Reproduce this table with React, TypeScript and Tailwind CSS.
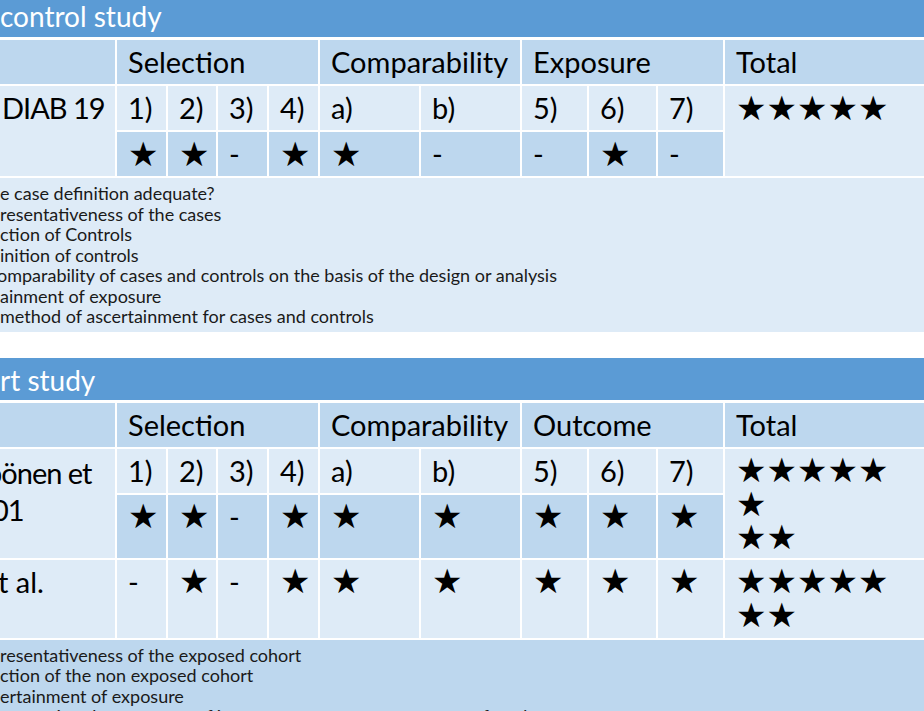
const font = "font-['Lato','DejaVu_Sans',sans-serif]"

const cols =
  "grid grid-cols-[115px_49px_48px_49px_49px_99px_99px_65px_67px_65px_199px] gap-[2px] bg-white"

type CellProps = {
  children?: React.ReactNode
  dark?: boolean
  className?: string
}

function Cell({ children, dark, className = "pl-[11px]" }: CellProps) {
  return (
    <div
      className={`${dark ? "bg-[#bdd7ee]" : "bg-[#deebf7]"} pt-[5px] text-[29px] leading-[34px] text-black whitespace-nowrap overflow-hidden ${className}`}
    >
      {children}
    </div>
  )
}

function Stars({ lines }: { lines: string[] }) {
  return (
    <div className="flex flex-col">
      {lines.map((l, i) => (
        <div key={i} className="h-[33.5px] flex items-center">
          <span className="font-['DejaVu_Sans',sans-serif] text-[34px] leading-none">
            {l}
          </span>
        </div>
      ))}
    </div>
  )
}

const S = "★"

function Mark({ v }: { v: string }) {
  if (v === "-") return <span>-</span>
  return <Stars lines={[S]} />
}

function TitleBar({ text, tall }: { text: string; tall?: boolean }) {
  return (
    <div
      className={`bg-[#5b9bd5] text-white text-[28px] leading-[32px] whitespace-nowrap overflow-hidden ${
        tall ? "h-[42px] pt-[6px]" : "h-[37px]"
      }`}
    >
      {text}
    </div>
  )
}

function Legend({ lines, dark }: { lines: { t: string; ml?: string }[]; dark?: boolean }) {
  return (
    <div
      className={`${dark ? "bg-[#bdd7ee]" : "bg-[#deebf7]"} mt-[2px] pt-[5px] pb-[5px] text-[18px] leading-[20.5px] text-[#1a1a1a] overflow-hidden`}
    >
      {lines.map((l, i) => (
        <div key={i} className={`whitespace-nowrap ${l.ml ?? ""}`}>
          {l.t}
        </div>
      ))}
    </div>
  )
}

const nums = ["1)", "2)", "3)", "4)", "a)", "b)", "5)", "6)", "7)"]

export default function App() {
  const caseMarks = ["*", "*", "-", "*", "*", "-", "-", "*", "-"]
  const cohortMarks1 = ["*", "*", "-", "*", "*", "*", "*", "*", "*"]
  const cohortMarks2 = ["-", "*", "-", "*", "*", "*", "*", "*", "*"]

  return (
    <div className={`${font} w-[924px] h-[711px] overflow-hidden bg-white`}>
      {/* case control study */}
      <TitleBar text="control study" />
      <div className={`${cols} grid-rows-[44px_44px_44px] mt-[3px]`}>
        <Cell dark />
        <Cell dark className="col-span-4 pl-[11px]">Selection</Cell>
        <Cell dark className="col-span-2 pl-[11px]">Comparability</Cell>
        <Cell dark className="col-span-3 pl-[11px]">Exposure</Cell>
        <Cell dark>Total</Cell>

        <Cell className="row-span-2 pl-[2px] tracking-[-1px]">DIAB 19</Cell>
        {nums.map((n) => (
          <Cell key={n}>{n}</Cell>
        ))}
        <Cell className="row-span-2 pl-[11px]">
          <Stars lines={[S.repeat(5)]} />
        </Cell>

        {caseMarks.map((m, i) => (
          <Cell dark key={i}>
            <Mark v={m} />
          </Cell>
        ))}
      </div>
      <Legend
        lines={[
          { t: "e case definition adequate?" },
          { t: "resentativeness of the cases" },
          { t: "ction of Controls" },
          { t: "inition of controls" },
          { t: "omparability of cases and controls on the basis of the design or analysis", ml: "-ml-[3px]" },
          { t: "ainment of exposure" },
          { t: "method of ascertainment for cases and controls" },
        ]}
      />

      {/* cohort study */}
      <div className="mt-[26px]">
        <TitleBar text="rt study" tall />
        <div className={`${cols} grid-rows-[44px_44px_63px_78px] mt-[3px]`}>
          <Cell dark />
          <Cell dark className="col-span-4 pl-[11px]">Selection</Cell>
          <Cell dark className="col-span-2 pl-[11px]">Comparability</Cell>
          <Cell dark className="col-span-3 pl-[11px]">Outcome</Cell>
          <Cell dark>Total</Cell>

          <Cell className="row-span-2 leading-[37px] tracking-[-1px]">
            <div className="-ml-[14px]">pönen et</div>
            <div className="-ml-[8px]">01</div>
          </Cell>
          {nums.map((n) => (
            <Cell key={n}>{n}</Cell>
          ))}
          <Cell className="row-span-2 pl-[11px]">
            <Stars lines={[S.repeat(5), S, S.repeat(2)]} />
          </Cell>

          {cohortMarks1.map((m, i) => (
            <Cell dark key={i}>
              <Mark v={m} />
            </Cell>
          ))}

          <Cell className="pl-0">
            <div className="-ml-[2px]">t al.</div>
          </Cell>
          {cohortMarks2.map((m, i) => (
            <Cell key={i}>
              <Mark v={m} />
            </Cell>
          ))}
          <Cell>
            <Stars lines={[S.repeat(5), S.repeat(2)]} />
          </Cell>
        </div>
        <Legend
          dark
          lines={[
            { t: "resentativeness of the exposed cohort" },
            { t: "ction of the non exposed cohort" },
            { t: "ertainment of exposure" },
            { t: "onstration that outcome of interest was not present at start of study" },
          ]}
        />
      </div>
    </div>
  )
}
